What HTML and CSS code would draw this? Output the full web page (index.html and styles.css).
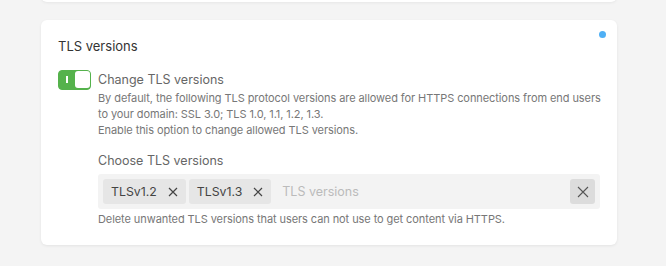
FILE: index.html
```html
<!DOCTYPE html>
<html>
<head>
<meta charset="utf-8">
<link rel="stylesheet" href="styles.css">
</head>
<body>
<div class="top-card"></div>
<section class="card">
  <span class="dot"></span>
  <h2 class="title">TLS versions</h2>
  <div class="row">
    <div class="toggle"><span class="mark"></span><span class="knob"></span></div>
    <div class="content">
      <div class="label">Change TLS versions</div>
      <p class="desc">By default, the following TLS protocol versions are allowed for HTTPS connections from end users<br>to your domain: SSL 3.0; TLS 1.0, 1.1, 1.2, 1.3.<br>Enable this option to change allowed TLS versions.</p>
      <div class="field-label">Choose TLS versions</div>
      <div class="select">
        <span class="chip">TLSv1.2<svg class="x" viewBox="0 0 10 10" width="10" height="10"><path d="M1 1L9 9M9 1L1 9" stroke="#444" stroke-width="1.2" fill="none"/></svg></span>
        <span class="chip">TLSv1.3<svg class="x" viewBox="0 0 10 10" width="10" height="10"><path d="M1 1L9 9M9 1L1 9" stroke="#444" stroke-width="1.2" fill="none"/></svg></span>
        <span class="placeholder">TLS versions</span>
        <span class="clear"><svg viewBox="0 0 12 12" width="12" height="12"><path d="M1 1L11 11M11 1L1 11" stroke="#555" stroke-width="1.1" fill="none"/></svg></span>
      </div>
      <p class="help">Delete unwanted TLS versions that users can not use to get content via HTTPS.</p>
    </div>
  </div>
</section>
</body>
</html>
```

FILE: styles.css
```css
* { box-sizing: border-box; }
body {
  margin: 0;
  background: #f4f4f4;
  font-family: Inter, "Noto Sans", sans-serif;
  color: #333;
  width: 666px;
  height: 266px;
  overflow: hidden;
}
.top-card {
  margin: -20px 0 0 41px;
  width: 576px;
  height: 22px;
  background: #fff;
  border-radius: 6px;
  box-shadow: 0 1px 3px rgba(0,0,0,0.06);
}
.card {
  position: relative;
  margin: 18px 0 0 41px;
  width: 576px;
  background: #fff;
  border-radius: 6px;
  box-shadow: 0 1px 3px rgba(0,0,0,0.07);
  padding: 17px 17px 18px 17px;
}
.dot {
  position: absolute;
  top: 11px;
  right: 11px;
  width: 7px;
  height: 7px;
  border-radius: 50%;
  background: #4fb0f5;
}
.title {
  margin: 0;
  font-size: 13px;
  font-weight: 400;
  line-height: 18px;
  color: #333;
}
.row {
  display: flex;
  gap: 7px;
  margin-top: 15px;
}
.toggle {
  position: relative;
  flex: none;
  width: 33px;
  height: 20px;
  border-radius: 4px;
  background: #55b24c;
  border: 1.5px solid #55b24c;
}
.mark {
  position: absolute;
  left: 7px;
  top: 5px;
  width: 1.5px;
  height: 7px;
  background: #fff;
}
.knob {
  position: absolute;
  right: 0;
  top: 0;
  width: 15px;
  height: 17px;
  background: #fff;
  border-radius: 3px;
}
.content {
  flex: 1;
  min-width: 0;
}
.label {
  font-size: 12.5px;
  line-height: 20px;
  color: #666;
}
.desc {
  margin: 0;
  font-size: 11px;
  letter-spacing: -0.08px;
  line-height: 16px;
  color: #777;
  white-space: nowrap;
}
.field-label {
  margin-top: 13px;
  font-size: 12.5px;
  line-height: 20px;
  color: #666;
}
.select {
  margin-top: 3px;
  display: flex;
  align-items: center;
  gap: 3px;
  height: 35px;
  padding: 5px;
  background: #f3f3f3;
  border-radius: 3px;
}
.chip {
  display: flex;
  align-items: center;
  gap: 11px;
  height: 25px;
  padding: 0 8px;
  background: #e6e6e6;
  border-radius: 3px;
  font-size: 12.3px;
  color: #444;
}
.placeholder {
  flex: 1;
  margin-left: 8px;
  font-size: 12.5px;
  color: #bbb;
}
.clear {
  display: flex;
  align-items: center;
  justify-content: center;
  width: 25px;
  height: 25px;
  background: #dcdcdc;
  border-radius: 3px;
}
.help {
  margin: 2px 0 0;
  font-size: 11px;
  letter-spacing: -0.08px;
  line-height: 16px;
  color: #777;
}
```
